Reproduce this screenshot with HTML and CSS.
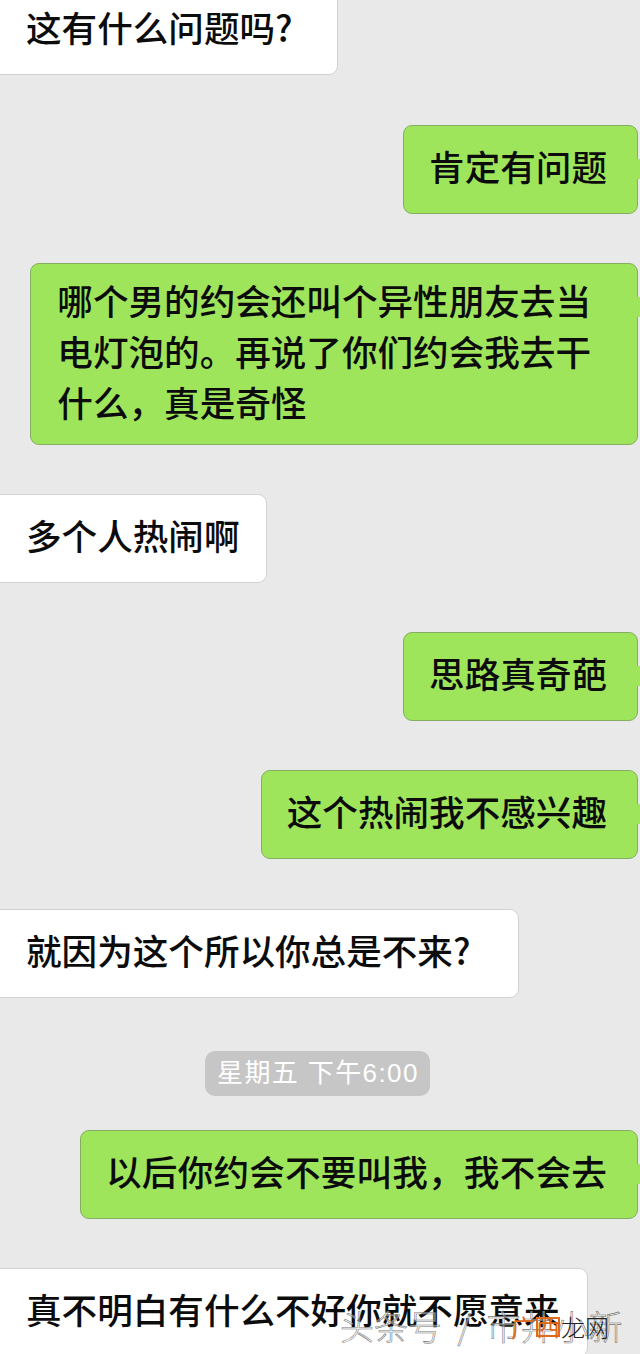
FILE: index.html
```html
<html>
    <head>
        <title>Chat</title>
        <meta charset="utf-8">
        <link rel="stylesheet" href="styles.css">
    </head>
    <body>
        <div id="chat">
            <div class="msg them first">这有什么问题吗?</div>
            <div class="msg me">肯定有问题</div>
            <div class="msg me long">哪个男的约会还叫个异性朋友去当<br>电灯泡的。再说了你们约会我去干<br>什么，真是奇怪</div>
            <div class="msg them">多个人热闹啊</div>
            <div class="msg me">思路真奇葩</div>
            <div class="msg me">这个热闹我不感兴趣</div>
            <div class="msg them ask">就因为这个所以你总是不来?</div>
            <div class="time">星期五 下午6:00</div>
            <div class="msg me wide">以后你约会不要叫我，我不会去</div>
            <div class="msg them">真不明白有什么不好你就不愿意来</div>
        </div>
        <div id="mark">头条号 / 市井小新</div>
        <div id="site"><span class="orange">广</span><span class="orange boxed">西</span>龙网</div>
    </body>
</html>
```

FILE: styles.css
```css
html, body {
    margin: 0;
    width: 640px;
    height: 1354px;
    overflow: hidden;
    background-color: #e9e9ea;
}
body {
    position: relative;
    font-family: "Noto Sans CJK SC", sans-serif;
    color: #0c0c0c;
}
#chat {
    display: flex;
    flex-direction: column;
    align-items: flex-start;
    margin-top: -14px;
}
.msg {
    position: relative;
    box-sizing: border-box;
    min-height: 89px;
    margin-bottom: 49px;
    padding: 14px 30px 16px 25px;
    border-radius: 9px;
    font-size: 35.6px;
    font-weight: 500;
    line-height: 51px;
    white-space: nowrap;
}
.them {
    margin-left: -10px;
    padding-left: 35px;
    padding-right: 27px;
    background-color: #fff;
    border: 1px solid #d2d2d3;
}
.ask {
    margin-top: 1px;
    padding-right: 48px;
}
.me {
    align-self: flex-end;
    margin-right: 2px;
    background-color: #9fe55c;
    border: 1px solid #86ad61;
}
.me::after {
    content: "";
    position: absolute;
    top: 33px;
    right: -3px;
    width: 4px;
    height: 20px;
    background-color: #9fe55c;
}
.first {
    margin-bottom: 50px;
    padding-right: 44px;
}
.long {
    padding: 10px 46px 17px 26px;
}
.wide {
    letter-spacing: 0.2px;
}
.time {
    align-self: flex-start;
    margin: 4px 0 34px 205px;
    width: 225px;
    box-sizing: border-box;
    padding: 0 12px;
    height: 45px;
    line-height: 44px;
    border-radius: 10px;
    background-color: #c6c6c6;
    color: #fff;
    font-family: "Liberation Sans", "Noto Sans CJK SC", sans-serif;
    font-size: 26px;
    letter-spacing: 1.4px;
    white-space: nowrap;
}
#mark {
    position: absolute;
    left: 340px;
    top: 1304px;
    font-size: 34px;
    line-height: 44px;
    font-weight: 300;
    word-spacing: 8px;
    color: rgba(255, 255, 255, 0.45);
    -webkit-text-stroke: 0.6px #777;
    white-space: nowrap;
}
#site {
    position: absolute;
    left: 511px;
    top: 1311px;
    font-size: 24px;
    font-weight: 300;
    line-height: 32px;
    color: #222;
    white-space: nowrap;
}
.orange {
    color: #e0691c;
    font-weight: 400;
}
.boxed {
    display: inline-block;
    height: 20px;
    line-height: 18px;
    margin: 0 1px;
    outline: 2px solid #e0691c;
    outline-offset: -2px;
    vertical-align: 1px;
}
```
